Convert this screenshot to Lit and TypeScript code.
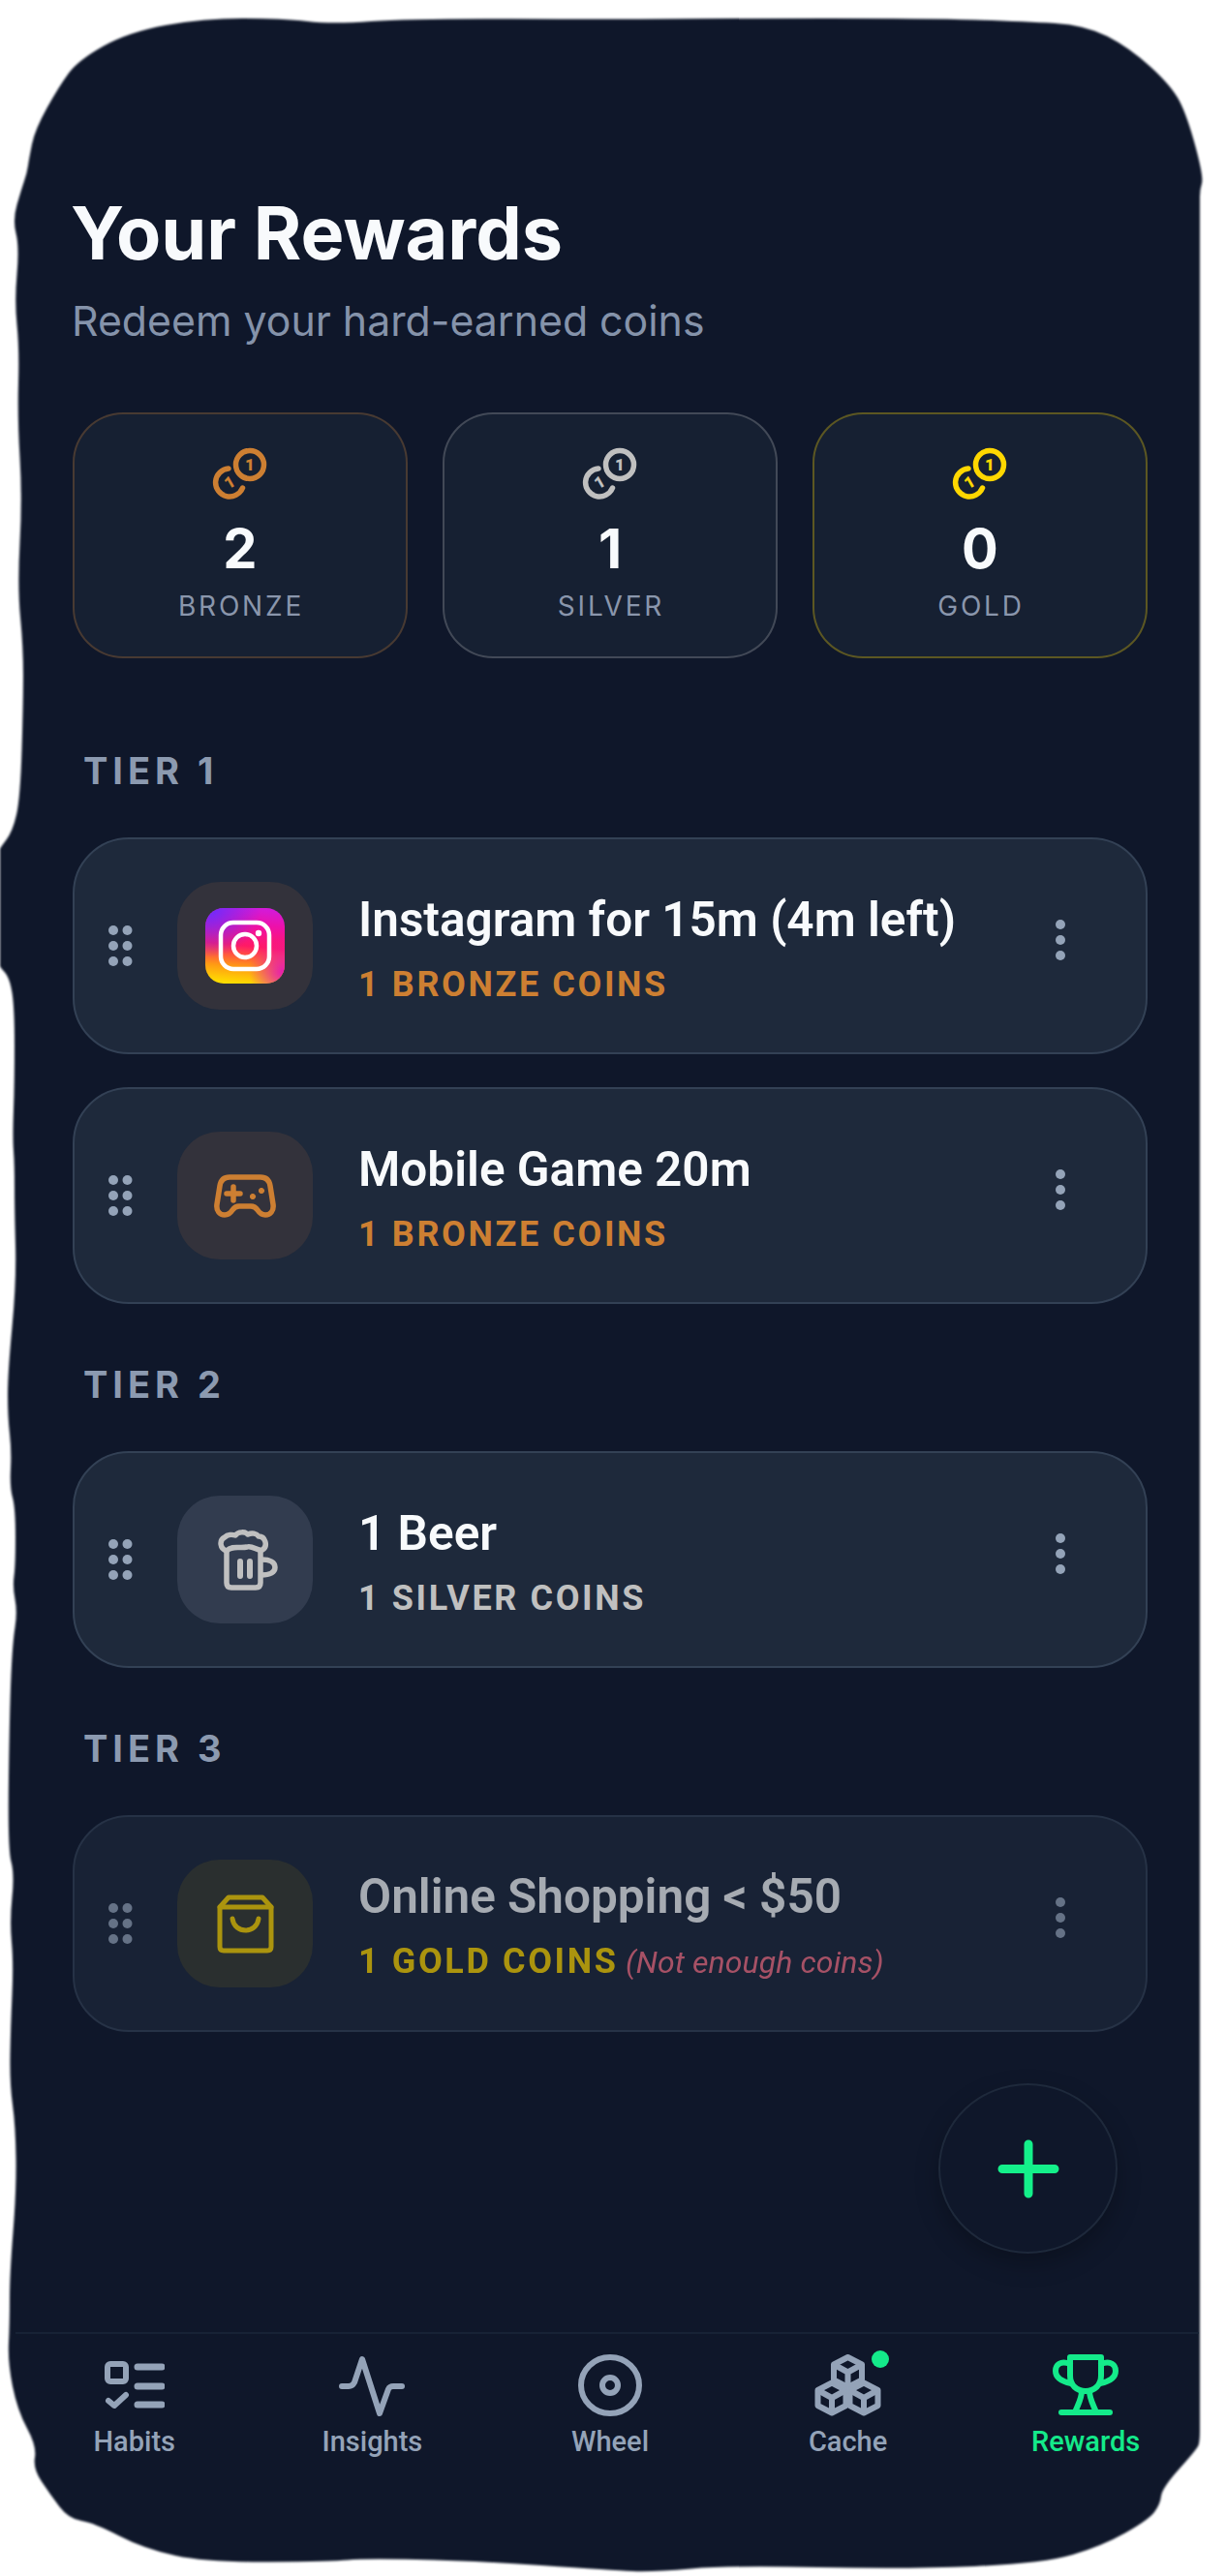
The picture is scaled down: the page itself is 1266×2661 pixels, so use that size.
import { LitElement, html, css, svg } from "lit";
import { customElement } from "lit/decorators.js";

// outline of the dark screen shape, traced clockwise from the top left
const OUTLINE: [number, number][] = [
  [30, 164], [36, 134], [61, 89], [81, 62], [133, 33], [210, 19], [291, 19], [343, 25], [424, 19],
  [633, 20], [754, 19], [956, 19], [1057, 22], [1121, 26], [1166, 49], [1210, 89], [1226, 120],
  [1243, 183], [1239, 196], [1239, 210], [1239, 1300], [1239, 2500], [1239, 2522], [1236, 2530], [1200, 2570], [1198, 2587], [1186, 2603],
  [1138, 2630], [1077, 2648], [936, 2654], [754, 2650], [673, 2657], [633, 2655], [484, 2645],
  [375, 2643], [343, 2646], [214, 2647], [149, 2633], [97, 2606], [71, 2602], [52, 2577], [34, 2550],
  [38, 2527], [18, 2490], [8, 2440], [10, 2400], [10, 2350], [17, 2262], [16, 2196], [10, 2152],
  [11, 2094], [14, 2028], [10, 1984], [15, 1936], [8, 1910], [10, 1764], [13, 1697], [18, 1665],
  [13, 1639], [16, 1617], [16, 1558], [10, 1536], [12, 1499], [8, 1463], [8, 1419], [17, 1323],
  [15, 1250], [15, 1203], [13, 1175], [15, 1118], [15, 1041], [10, 1010], [0, 999], [-4, 990],
  [-4, 885], [0, 876], [13, 859], [21, 824], [24, 725], [24, 669], [18, 606], [23, 515], [18, 431],
  [20, 360], [15, 311], [20, 255], [13, 227], [22, 196], [28, 178],
];

function outlinePath() {
  const mid = (a: number[], b: number[]) => [(a[0] + b[0]) / 2, (a[1] + b[1]) / 2];
  const n = OUTLINE.length;
  const start = mid(OUTLINE[n - 1], OUTLINE[0]);
  let d = `M${start[0]} ${start[1]}`;
  OUTLINE.forEach((p, i) => {
    const m = mid(p, OUTLINE[(i + 1) % n]);
    d += `Q${p[0]} ${p[1]} ${m[0]} ${m[1]}`;
  });
  return d + "Z";
}

const coin = (color: string) => html`
  <svg width="100" height="80" viewBox="-2 0 100 80" fill="none" stroke=${color} stroke-width="5.5" stroke-linecap="round">
    <circle cx="58" cy="30" r="14.5"></circle>
    <path d="M36 34A14.5 14.5 0 1 0 50.5 54"></path>
    <text x="58" y="36" text-anchor="middle" fill=${color} stroke="none" font-family="Roboto" font-weight="900" font-size="17">1</text>
    <text x="0" y="0" transform="translate(37 48) rotate(-30) translate(0 6)" text-anchor="middle" fill=${color} stroke="none" font-family="Roboto" font-weight="900" font-size="17">1</text>
  </svg>
`;

const instagram = html`
  <svg width="82" height="78" viewBox="0 0 82 78" fill="none">
    <defs>
      <linearGradient id="ig" x1="0.45" y1="1" x2="0.55" y2="0">
        <stop offset="0" stop-color="#ffdc00"></stop>
        <stop offset="0.22" stop-color="#ff9a14"></stop>
        <stop offset="0.5" stop-color="#ff1a66"></stop>
        <stop offset="0.78" stop-color="#ee10a8"></stop>
        <stop offset="1" stop-color="#d41ad8"></stop>
      </linearGradient>
      <radialGradient id="ig-purple" cx="0.05" cy="0" r="0.65">
        <stop offset="0" stop-color="#6a2cff"></stop>
        <stop offset="1" stop-color="#6a2cff" stop-opacity="0"></stop>
      </radialGradient>
      <radialGradient id="ig-pink" cx="1" cy="0.85" r="0.45">
        <stop offset="0" stop-color="#e516b8"></stop>
        <stop offset="1" stop-color="#e516b8" stop-opacity="0"></stop>
      </radialGradient>
    </defs>
    <rect width="82" height="78" rx="19" fill="url(#ig)"></rect>
    <rect width="82" height="78" rx="19" fill="url(#ig-purple)"></rect>
    <rect width="82" height="78" rx="19" fill="url(#ig-pink)"></rect>
    <rect x="16" y="15" width="50" height="48" rx="13" stroke="#fff" stroke-width="4.5"></rect>
    <circle cx="41" cy="39" r="12" stroke="#fff" stroke-width="4.5"></circle>
    <circle cx="55" cy="26" r="3.2" fill="#fff"></circle>
  </svg>
`;

const gamepad = html`
  <svg width="64" height="45" viewBox="0 0 64 45" fill="none" stroke="#cd7f32" stroke-width="5.5" stroke-linecap="round" stroke-linejoin="round">
    <path d="M16 3H48C54 3 57 6 58 12L61 31C62 38 58 42 53 42C49 42 47 40 45 37C43 34 41 33 38 33H26C23 33 21 34 19 37C17 40 15 42 11 42C6 42 2 38 3 31L6 12C7 6 10 3 16 3Z"></path>
    <path d="M13 20H27M20 13V27"></path>
    <circle cx="40" cy="23" r="2.6" fill="#cd7f32" stroke-width="1"></circle>
    <circle cx="49" cy="17" r="2.6" fill="#cd7f32" stroke-width="1"></circle>
  </svg>
`;

const beer = html`
  <svg width="120" height="100" viewBox="0 0 120 100" fill="none" stroke="#c0c0c0" stroke-width="5.5" stroke-linecap="round" stroke-linejoin="round">
    <path d="M41 41C34 39 33 30 39 27C42 24 47 24 50 25C53 21 60 21 63 24C67 22 72 23 74 26C81 26 84 36 78 40C73 42 68 35 62 37C55 39 47 35 41 41Z"></path>
    <path d="M41 42V74Q41 79 46 79H71Q76 79 76 74V42"></path>
    <path d="M77 50C86 50 91 53 91 58C91 63 86 66 77 66"></path>
    <path d="M55 52V67M65 52V67" stroke-width="6"></path>
  </svg>
`;

const bag = html`
  <svg width="59" height="61" viewBox="0 0 59 61" fill="none" stroke="#ffd700" stroke-width="5" stroke-linecap="round" stroke-linejoin="round">
    <path d="M3 13L12 3H47L56 13V54Q56 58 52 58H7Q3 58 3 54Z"></path>
    <path d="M3 13H56"></path>
    <path d="M16 25C18 41 41 41 43 25"></path>
  </svg>
`;

const habitsIcon = html`
  <svg width="62" height="50" viewBox="0 0 62 50" fill="none" stroke="#94a3b8" stroke-width="6" stroke-linecap="round" stroke-linejoin="round">
    <rect x="3" y="3" width="19" height="18" rx="3"></rect>
    <path d="M4 41L10 46L22 35"></path>
    <path d="M34 6H59M34 26H59M34 45H59" stroke-width="7"></path>
  </svg>
`;

const insightsIcon = html`
  <svg width="68" height="63" viewBox="0 0 68 63" fill="none" stroke="#94a3b8" stroke-width="6" stroke-linecap="round" stroke-linejoin="round">
    <path d="M3 32H10C13 32 15 30 16 28L24 4L42 60L51 35C52 33 53 32 56 32H65"></path>
  </svg>
`;

const wheelIcon = html`
  <svg width="66" height="64" viewBox="0 0 66 64" fill="none" stroke="#94a3b8" stroke-width="6">
    <ellipse cx="33" cy="32" rx="30" ry="29"></ellipse>
    <ellipse cx="33" cy="32" rx="8" ry="8"></ellipse>
  </svg>
`;

const cube = (cx: number, cy: number) => svg`
  <path d="M${cx} ${cy - 15.5}L${cx + 14.5} ${cy - 8}V${cy + 8}L${cx} ${cy + 15.5}L${cx - 14.5} ${cy + 8}V${cy - 8}Z"></path>
  <path d="M${cx - 14.5} ${cy - 8}L${cx} ${cy}L${cx + 14.5} ${cy - 8}M${cx} ${cy}V${cy + 15.5}"></path>
`;

const cacheIcon = html`
  <svg width="69" height="64" viewBox="0 0 69 64" fill="none" stroke="#94a3b8" stroke-width="6" stroke-linejoin="round">
    ${cube(34.5, 18.5)}${cube(18, 45)}${cube(51, 45)}
  </svg>
`;

const trophyIcon = html`
  <svg width="68" height="64" viewBox="0 0 68 64" fill="none" stroke="#14ea8a" stroke-width="6" stroke-linecap="round" stroke-linejoin="round">
    <path d="M18 3H50V22C50 32 43 38 34 38C25 38 18 32 18 22Z"></path>
    <path d="M18 10C8 6 3 11 3 17C3 24 9 28 19 30"></path>
    <path d="M50 10C60 6 65 11 65 17C65 24 59 28 49 30"></path>
    <path d="M30 38C30 46 26 52 23 60M38 38C38 46 42 52 45 60"></path>
    <path d="M9 60H59"></path>
  </svg>
`;

const STATS = [
  { key: "bronze", color: "#cd7f32", count: 2, label: "BRONZE" },
  { key: "silver", color: "#c0c0c0", count: 1, label: "SILVER" },
  { key: "gold", color: "#ffd700", count: 0, label: "GOLD" },
];

const NAV = [
  { label: "Habits", icon: habitsIcon },
  { label: "Insights", icon: insightsIcon },
  { label: "Wheel", icon: wheelIcon },
  { label: "Cache", icon: cacheIcon, badge: true },
  { label: "Rewards", icon: trophyIcon, active: true },
];

@customElement("app-root")
export class AppRoot extends LitElement {
  static styles = css`
    :host {
      display: block;
      width: 1266px;
      height: 2661px;
      background: #fff;
      font-family: Roboto, "Liberation Sans", sans-serif;
    }
    .screen {
      position: relative;
      width: 1266px;
      height: 2661px;
      overflow: hidden;
      display: flex;
      flex-direction: column;
    }
    .shape {
      position: absolute;
      inset: 0;
      filter: blur(1px);
    }
    main {
      position: relative;
      padding: 205px 81px 0 75px;
      flex: 1;
    }
    h1 {
      margin: 0 0 0 -2px;
      font: 700 75.5px/72px Inter, Roboto, sans-serif;
      color: #f8fafc;
    }
    .subtitle {
      margin: 27px 0 0 -1px;
      font: 400 42.8px/56px Inter, Roboto, sans-serif;
      color: #8593aa;
    }
    .stats {
      margin-top: 66px;
      display: grid;
      grid-template-columns: repeat(3, 1fr);
      gap: 36px;
    }
    .stat {
      box-sizing: border-box;
      height: 254px;
      padding-top: 22px;
      border: 2px solid;
      border-radius: 52px;
      background: #162032;
      display: flex;
      flex-direction: column;
      align-items: center;
    }
    .stat.bronze { border-color: rgba(205, 127, 50, 0.28); }
    .stat.silver { border-color: rgba(192, 192, 192, 0.26); }
    .stat.gold { border-color: rgba(255, 215, 0, 0.3); }
    .count {
      margin-top: 7px;
      font: 700 56px/60px Inter, Roboto, sans-serif;
      color: #f8fafc;
    }
    .stat-label {
      margin: 14px 0 0 2px;
      font: 400 28px/30px Inter, Roboto, sans-serif;
      letter-spacing: 2.8px;
      color: #8a96ac;
    }
    .tier { margin-top: 63px; }
    .tier.first { margin-top: 96px; }
    .tier-label {
      padding-left: 11px;
      margin-bottom: 49px;
      font: 700 38px/40px Inter, Roboto, sans-serif;
      letter-spacing: 5px;
      color: #8c9ab0;
    }
    .rows {
      display: flex;
      flex-direction: column;
      gap: 34px;
    }
    .row {
      position: relative;
      box-sizing: border-box;
      height: 224px;
      border: 2px solid #334155;
      border-radius: 58px;
      background: #1e293b;
      display: flex;
      align-items: center;
    }
    .row.locked { opacity: 0.65; }
    .grip {
      flex: none;
      margin-left: 35px;
      display: block;
    }
    .tile {
      flex: none;
      width: 140px;
      height: 132px;
      margin-left: 41px;
      border-radius: 44px;
      display: flex;
      align-items: center;
      justify-content: center;
    }
    .tile.bronze { background: #33323b; }
    .tile.silver { background: #323c4f; }
    .tile.gold { background: #393c33; }
    .text {
      flex: 1;
      margin-left: 47px;
      padding-top: 4px;
    }
    .name {
      font: 600 49.5px/56px Roboto, sans-serif;
      color: #f8fafc;
    }
    .cost {
      margin-top: 19px;
      font: 700 36px/40px Roboto, sans-serif;
      letter-spacing: 2.6px;
      white-space: nowrap;
    }
    .cost.bronze { color: #cd7f32; }
    .cost.silver { color: #c0c0c0; }
    .cost.gold { color: #ffd700; }
    .warn {
      margin-left: -4px;
      font-weight: 400;
      font-style: italic;
      font-size: 32px;
      letter-spacing: 0.1px;
      color: #f87186;
    }
    .kebab {
      flex: none;
      display: block;
      margin: -12px 83px 0 0;
    }
    .fab {
      position: absolute;
      left: 969px;
      top: 2152px;
      box-sizing: border-box;
      width: 185px;
      height: 176px;
      border: 2px solid #1e293b;
      border-radius: 50%;
      background: #0f172a;
      box-shadow: 0 10px 24px rgba(0, 0, 0, 0.25);
      display: flex;
      align-items: center;
      justify-content: center;
    }
    nav {
      position: relative;
      box-sizing: border-box;
      height: 252px;
      width: 1222px;
      margin-left: 16px;
      padding-top: 21px;
      border-top: 2px solid #172235;
      display: grid;
      grid-template-columns: repeat(5, 245.6px);
    }
    .tab {
      display: flex;
      flex-direction: column;
      align-items: center;
      font: 500 29px/32px Roboto, sans-serif;
      color: #94a3b8;
    }
    .tab.active { color: #14ea8a; }
    .tab-icon {
      position: relative;
      height: 64px;
      margin-bottom: 10px;
      display: flex;
      align-items: center;
    }
    .badge {
      position: absolute;
      right: -8px;
      top: -4px;
      width: 18px;
      height: 18px;
      border-radius: 50%;
      background: #14ea8a;
    }
  `;

  renderGrip() {
    const cells = [0, 1, 2].flatMap((r) => [0, 1].map((c) => [5 + c * 14.5, 5 + r * 16]));
    return html`
      <svg class="grip" width="30" height="42" viewBox="0 0 30 42" fill="#94a3b8">
        ${cells.map(([x, y]) => svg`<circle cx=${x} cy=${y} r="5"></circle>`)}
      </svg>
    `;
  }

  renderRow(icon: unknown, tint: string, name: string, cost: string, locked = false) {
    return html`
      <div class="row ${locked ? "locked" : ""}">
        ${this.renderGrip()}
        <div class="tile ${tint}">${icon}</div>
        <div class="text">
          <div class="name">${name}</div>
          <div class="cost ${tint}">${cost}${locked ? html` <span class="warn">(Not enough coins)</span>` : ""}</div>
        </div>
        <svg class="kebab" width="10" height="42" viewBox="0 0 10 42" fill="#94a3b8">
          <circle cx="5" cy="5" r="5"></circle>
          <circle cx="5" cy="21" r="5"></circle>
          <circle cx="5" cy="37" r="5"></circle>
        </svg>
      </div>
    `;
  }

  render() {
    return html`
      <div class="screen">
        <svg class="shape" width="1266" height="2661" viewBox="0 0 1266 2661">
          <path d=${outlinePath()} fill="#0f172a"></path>
        </svg>
        <main>
          <h1>Your Rewards</h1>
          <div class="subtitle">Redeem your hard-earned coins</div>
          <div class="stats">
            ${STATS.map(
              (s) => html`
                <div class="stat ${s.key}">
                  ${coin(s.color)}
                  <div class="count">${s.count}</div>
                  <div class="stat-label">${s.label}</div>
                </div>
              `
            )}
          </div>
          <section class="tier first">
            <div class="tier-label">TIER 1</div>
            <div class="rows">
              ${this.renderRow(instagram, "bronze", "Instagram for 15m (4m left)", "1 BRONZE COINS")}
              ${this.renderRow(gamepad, "bronze", "Mobile Game 20m", "1 BRONZE COINS")}
            </div>
          </section>
          <section class="tier">
            <div class="tier-label">TIER 2</div>
            <div class="rows">${this.renderRow(beer, "silver", "1 Beer", "1 SILVER COINS")}</div>
          </section>
          <section class="tier">
            <div class="tier-label">TIER 3</div>
            <div class="rows">${this.renderRow(bag, "gold", "Online Shopping < $50", "1 GOLD COINS", true)}</div>
          </section>
        </main>
        <div class="fab">
          <svg width="64" height="61" viewBox="0 0 64 61" fill="none" stroke="#14f08a" stroke-width="9" stroke-linecap="round">
            <path d="M5 30.5H59M32 5V56"></path>
          </svg>
        </div>
        <nav>
          ${NAV.map(
            (t) => html`
              <div class="tab ${t.active ? "active" : ""}">
                <div class="tab-icon">${t.icon}${t.badge ? html`<span class="badge"></span>` : ""}</div>
                ${t.label}
              </div>
            `
          )}
        </nav>
      </div>
    `;
  }
}
